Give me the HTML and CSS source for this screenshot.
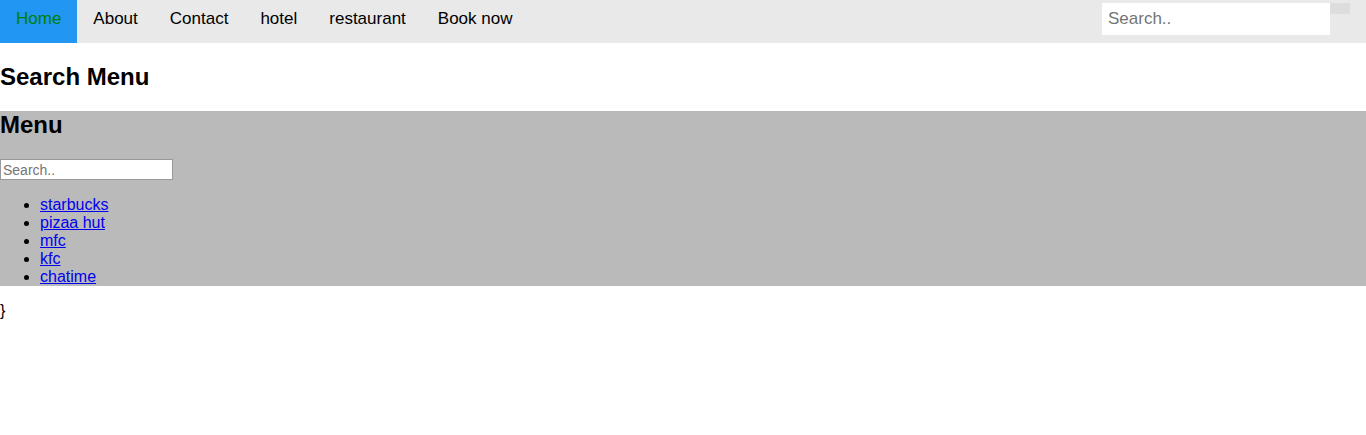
FILE: index.html
```html
<!DOCTYPE html>
<html>
<head>
<meta charset="utf-8">
<link rel="stylesheet" href="styles.css">
</head>
<body>
<div class="topnav">
  <a class="active" href="#">Home</a>
  <a href="#">About</a>
  <a href="#">Contact</a>
  <a href="#">hotel</a>
  <a href="#">restaurant</a>
  <a href="#">Book now</a>
  <div class="nav-search">
    <input type="text" placeholder="Search..">
    <button class="nav-btn" type="button"></button>
  </div>
</div>
<h2 class="title">Search Menu</h2>
<div class="menu">
  <h2 class="menu-title">Menu</h2>
  <input class="menu-input" type="text" placeholder="Search..">
  <ul class="menu-list">
    <li><a href="#">starbucks</a></li>
    <li><a href="#">pizaa hut</a></li>
    <li><a href="#">mfc</a></li>
    <li><a href="#">kfc</a></li>
    <li><a href="#">chatime</a></li>
  </ul>
</div>
<p class="brace">}</p>
</body>
</html>
```
FILE: styles.css
```css
body {
  margin: 0;
  font-family: "Liberation Sans", Arial, sans-serif;
  font-size: 16px;
}
.topnav {
  display: flex;
  align-items: flex-start;
  height: 43px;
  background: #e9e9e9;
}
.topnav a {
  display: block;
  height: 43px;
  box-sizing: border-box;
  padding: 9px 16px 0;
  font-size: 17px;
  line-height: 20px;
  color: #000;
  text-decoration: none;
}
.topnav a.active {
  background: #2196f3;
  color: #008000;
}
.nav-search {
  margin-left: auto;
  margin-right: 16px;
  display: flex;
  align-items: flex-start;
  padding-top: 3px;
}
.nav-search input {
  width: 228px;
  height: 32px;
  box-sizing: border-box;
  border: none;
  padding: 6px;
  font-family: "Liberation Sans", Arial, sans-serif;
  font-size: 17px;
  background: #fff;
  outline: none;
}
.nav-search input::placeholder {
  color: #757575;
}
.nav-btn {
  width: 20px;
  height: 11px;
  padding: 0;
  border: none;
  background: #ddd;
}
.title {
  margin: 20px 0;
  font-size: 24px;
  line-height: 28px;
}
.menu {
  background: #bababa;
}
.menu-title {
  margin: 20px 0;
  font-size: 24px;
  line-height: 28px;
}
.menu-input {
  display: block;
  width: 173px;
  height: 21px;
  box-sizing: border-box;
  border: 1px solid #999;
  padding: 0 2px;
  font-family: "Liberation Sans", Arial, sans-serif;
  font-size: 14px;
  background: #fff;
}
.menu-input::placeholder {
  color: #757575;
}
.menu-list {
  margin: 16px 0;
  padding-left: 40px;
  line-height: 18px;
}
.menu-list a {
  color: #0000ee;
}
.brace {
  margin: 16px 0;
  line-height: 18px;
}
```
